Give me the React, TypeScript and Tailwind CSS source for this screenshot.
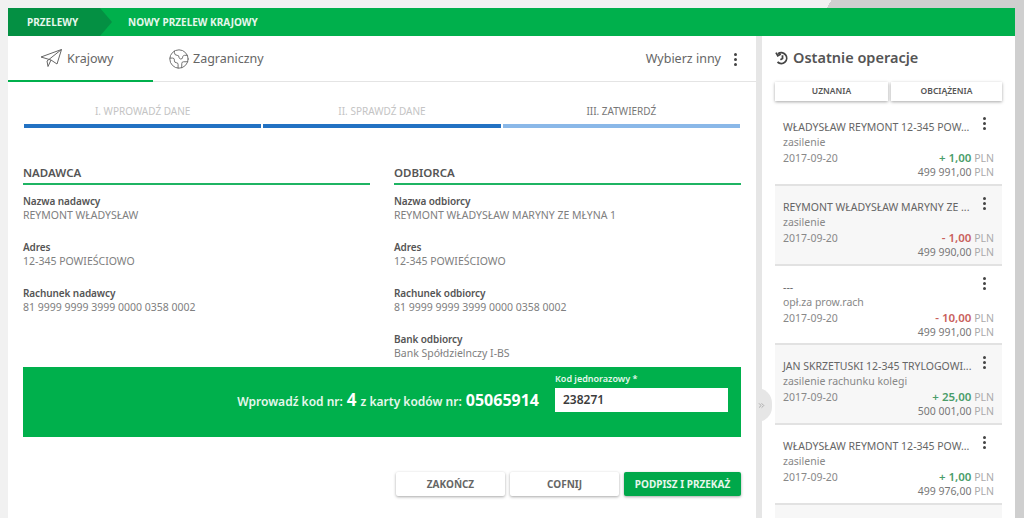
import { ChevronsRight, Earth } from "lucide-react";

const operations = [
  { title: "WŁADYSŁAW REYMONT 12-345 POW...", desc: "zasilenie", date: "2017-09-20", amount: "+ 1,00", up: true, balance: "499 991,00" },
  { title: "REYMONT WŁADYSŁAW MARYNY ZE ...", desc: "zasilenie", date: "2017-09-20", amount: "- 1,00", up: false, balance: "499 990,00" },
  { title: "---", desc: "opł.za prow.rach", date: "2017-09-20", amount: "- 10,00", up: false, balance: "499 991,00" },
  { title: "JAN SKRZETUSKI 12-345 TRYLOGOWI...", desc: "zasilenie rachunku kolegi", date: "2017-09-20", amount: "+ 25,00", up: true, balance: "500 001,00" },
  { title: "WŁADYSŁAW REYMONT 12-345 POW...", desc: "zasilenie", date: "2017-09-20", amount: "+ 1,00", up: true, balance: "499 976,00" },
];

function Dots() {
  return (
    <span className="flex flex-col gap-[2px]">
      <span className="w-[3px] h-[3px] rounded-full bg-[#444]" />
      <span className="w-[3px] h-[3px] rounded-full bg-[#444]" />
      <span className="w-[3px] h-[3px] rounded-full bg-[#444]" />
    </span>
  );
}

function Field({ label, value }: { label: string; value: string }) {
  return (
    <div className="h-[46px]">
      <div className="text-[10px] leading-[14px] font-semibold tracking-[-0.1px] text-[#555]">{label}</div>
      <div className="text-[10.5px] leading-[14px] text-[#808080]">{value}</div>
    </div>
  );
}

function Operation({ op, shaded }: { op: (typeof operations)[number]; shaded: boolean }) {
  return (
    <div className={`h-[79.75px] shrink-0 border-b-2 border-[#e2e2e2] pl-2 pr-2 pt-[14px] ${shaded ? "bg-[#f7f7f7]" : "bg-white"}`}>
      <div className="flex justify-between pr-[8px]">
        <div className="text-[10.5px] leading-[14px] text-[#666] whitespace-nowrap">{op.title}</div>
        <div className="-mt-[3px]">
          <Dots />
        </div>
      </div>
      <div className="text-[10.5px] leading-[16px] text-[#888]">{op.desc}</div>
      <div className="flex justify-between">
        <div className="text-[10.5px] leading-[16px] text-[#888]">{op.date}</div>
        <div className="text-right">
          <div className="leading-[16px] text-[10.5px] text-[#aaa]">
            <span className={`text-[11.5px] font-semibold ${op.up ? "text-[#4a9d6a]" : "text-[#c9605c]"}`}>{op.amount}</span> PLN
          </div>
          <div className="leading-[12px] text-[10.5px] text-[#aaa]">
            <span className="text-[#777]">{op.balance}</span> PLN
          </div>
        </div>
      </div>
    </div>
  );
}

export default function App() {
  return (
    <div className="h-[518px] overflow-hidden bg-[linear-gradient(120deg,#f1f1f1_0,#f1f1f1_720px,#cfcfcf_720px)] pl-2 pr-[9px] pt-2 font-['Noto_Sans',sans-serif]">
      {/* Breadcrumb bar */}
      <div className="flex h-[28px] items-center bg-[#00b04c] text-[10px] font-bold text-[#e6f7ec]">
        <div className="relative flex h-full w-[92px] items-center bg-[#049043] pl-[19px]">
          PRZELEWY
          <span className="absolute -right-[12px] top-0 h-0 w-0 border-y-[14px] border-l-[12px] border-y-transparent border-l-[#049043]" />
        </div>
        <div className="pl-[28px]">NOWY PRZELEW KRAJOWY</div>
      </div>

      <div className="flex h-[482px]">
        {/* Main panel */}
        <div className="w-[748px] shrink-0 bg-white">
          <div className="flex h-[46px] items-center border-b border-[#e4e4e4] pt-[1px] text-[12.5px] text-[#666]">
            <div className="flex h-[46px] w-[145px] items-center gap-[5px] border-b-2 border-[#00b04c] pl-[32px] pt-[2px]">
              <svg width="22" height="20" viewBox="0 0 22 20" fill="none" stroke="#666" strokeWidth="1" strokeLinejoin="round">
                <path d="M1 8 L21.5 0.5 L17 15 L11 11 Z" />
                <path d="M21.5 0.5 L7 12 L8 17.5 L11 11" />
              </svg>
              Krajowy
            </div>
            <div className="flex items-center gap-[3px] pl-[15px]">
              <Earth size={22} strokeWidth={1} color="#666" />
              Zagraniczny
            </div>
            <div className="ml-auto flex items-center gap-[13px] pr-[19px]">
              Wybierz inny
              <Dots />
            </div>
          </div>

          <div className="pl-4 pr-4 pt-[22px]">
            <div className="grid grid-cols-3 gap-[2px] text-center text-[10px] leading-[14px]">
              <div>
                <div className="text-[#c4c4c4]">I. WPROWADŹ DANE</div>
                <div className="mt-[6px] h-[4px] bg-[#2272c3]" />
              </div>
              <div>
                <div className="text-[#c4c4c4]">II. SPRAWDŹ DANE</div>
                <div className="mt-[6px] h-[4px] bg-[#2272c3]" />
              </div>
              <div>
                <div className="text-[#777]">III. ZATWIERDŹ</div>
                <div className="mt-[6px] h-[4px] bg-[#8ab8e8]" />
              </div>
            </div>
          </div>

          <div className="mt-[37px] grid h-[202px] grid-cols-2 gap-x-[24px] overflow-hidden pl-[15px] pr-[15px]">
            <div>
              <div className="mb-[9px] border-b-2 border-[#1fb463] pb-[2px] text-[11.5px] leading-[16px] font-semibold text-[#555]">NADAWCA</div>
              <Field label="Nazwa nadawcy" value="REYMONT WŁADYSŁAW" />
              <Field label="Adres" value="12-345 POWIEŚCIOWO" />
              <Field label="Rachunek nadawcy" value="81 9999 9999 3999 0000 0358 0002" />
            </div>
            <div>
              <div className="mb-[9px] border-b-2 border-[#1fb463] pb-[2px] text-[11.5px] leading-[16px] font-semibold text-[#555]">ODBIORCA</div>
              <Field label="Nazwa odbiorcy" value="REYMONT WŁADYSŁAW MARYNY ZE MŁYNA 1" />
              <Field label="Adres" value="12-345 POWIEŚCIOWO" />
              <Field label="Rachunek odbiorcy" value="81 9999 9999 3999 0000 0358 0002" />
              <Field label="Bank odbiorcy" value="Bank Spółdzielnczy I-BS" />
            </div>
          </div>

          {/* One-time code box */}
          <div className="ml-[15px] mr-[15px] flex h-[70px] justify-end bg-[#00b04c] pr-[13px] text-[#e6f7ec]">
            <div className="mt-[23px] flex items-baseline gap-[4px] self-start text-[12px] leading-[20px] font-semibold">
              <span>Wprowadź kod nr:</span>
              <span className="text-[17px] font-bold text-white">4</span>
              <span>z karty kodów nr:</span>
              <span className="text-[16px] font-bold text-white">05065914</span>
            </div>
            <div className="ml-[16px] w-[173px] pt-[6px]">
              <div className="text-[9px] leading-[12px] font-semibold">Kod jednorazowy *</div>
              <div className="mt-[3px] flex h-[24px] items-center bg-white pl-2 text-[12px] font-semibold text-[#3c3c3c]">238271</div>
            </div>
          </div>

          <div className="mt-[35px] flex justify-end gap-[5px] pr-[15px] text-[10px] font-bold">
            <button className="h-[24px] w-[109px] rounded-[2px] bg-white text-[#666] shadow-[0_1px_3px_rgba(0,0,0,0.35)]">ZAKOŃCZ</button>
            <button className="h-[24px] w-[109px] rounded-[2px] bg-white text-[#666] shadow-[0_1px_3px_rgba(0,0,0,0.35)]">COFNIJ</button>
            <button className="h-[24px] w-[117px] rounded-[2px] bg-[#00a84a] text-[#e6f7ec] shadow-[0_1px_3px_rgba(0,0,0,0.35)]">PODPISZ I PRZEKAŻ</button>
          </div>
        </div>

        <div className="w-[6px] shrink-0 bg-[#e6e6e6]" />

        {/* Recent operations */}
        <div className="relative flex-1 bg-white pl-[13px] pr-[13px]">
          <span className="absolute -left-[5px] top-[352px] flex h-[34px] w-[15px] items-center rounded-r-full bg-[#e6e6e6] text-[#999]">
            <ChevronsRight size={9} />
          </span>
          <div className="flex h-[46px] items-center gap-[4px] pb-[3px] text-[14.5px] font-semibold text-[#555]">
            <svg width="14" height="14" viewBox="0 0 14 14" fill="none" stroke="#444" strokeWidth="1.8">
              <path d="M3 2.8 A5.4 5.4 0 1 1 2.5 11" />
              <path d="M1 1.6 L2.8 4.8 L5.8 3" />
              <path d="M7.5 4.2 V7.6 L5.4 8.8" />
            </svg>
            Ostatnie operacje
          </div>
          <div className="flex gap-[3px] text-[8.5px] font-semibold text-[#555]">
            <div className="flex h-[19px] w-[113px] items-center justify-center bg-white shadow-[0_1px_3px_rgba(0,0,0,0.35)]">UZNANIA</div>
            <div className="flex h-[19px] w-[111px] items-center justify-center bg-white shadow-[0_1px_3px_rgba(0,0,0,0.35)]">OBCIĄŻENIA</div>
          </div>
          <div className="mt-[5px] flex flex-col">
            {operations.map((op, i) => (
              <Operation key={i} op={op} shaded={i % 2 === 1 || i === 3} />
            ))}
            <div className="h-[20px] bg-[#f7f7f7]" />
          </div>
        </div>
      </div>
    </div>
  );
}
